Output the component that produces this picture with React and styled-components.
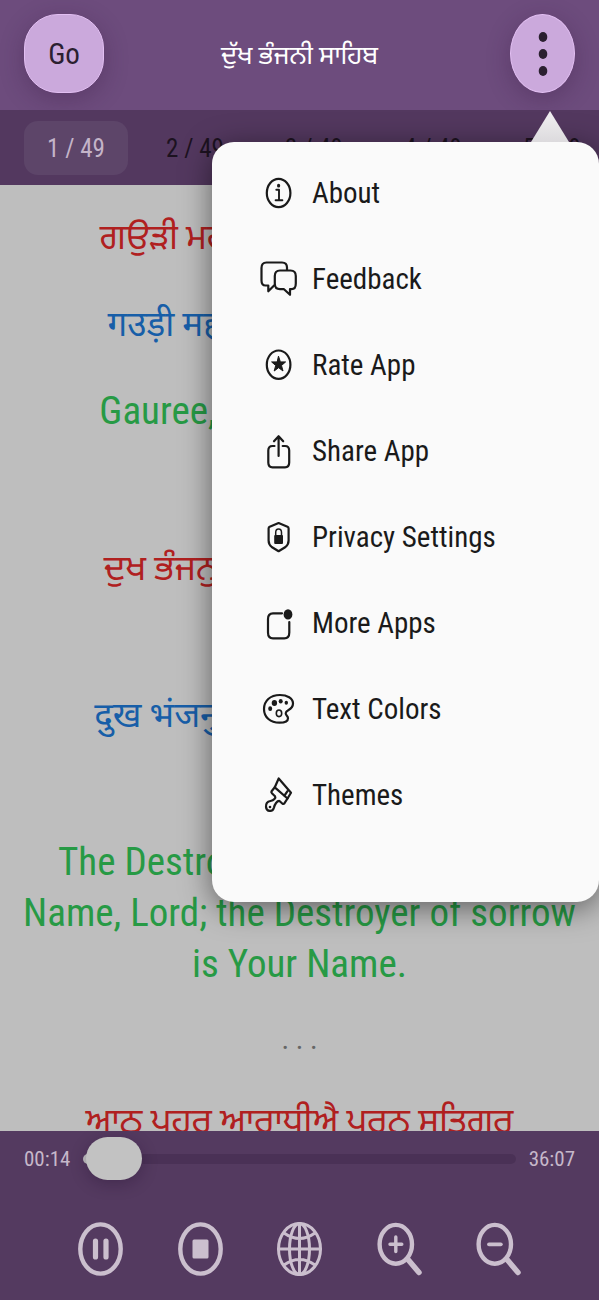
import React, { useState } from "react";
import styled, { createGlobalStyle } from "styled-components";

const GlobalStyle = createGlobalStyle`
    * {
        box-sizing: border-box;
    }
    body {
        margin: 0;
        font-family: "Roboto Condensed", "Liberation Sans Narrow", Roboto, "Noto Sans", "Noto Sans Gurmukhi", "Noto Sans Devanagari", sans-serif;
    }
    button {
        padding: 0;
        border: 0;
        background: none;
        color: inherit;
        font: inherit;
        cursor: pointer;
    }
    svg {
        display: block;
    }
`;

const Screen = styled.div`
    position: relative;
    display: flex;
    flex-direction: column;
    height: 100vh;
    overflow: hidden;
    background: #bebebe;
`;

const Header = styled.header`
    display: grid;
    grid-template-columns: 1fr auto 1fr;
    align-items: center;
    height: 110px;
    padding: 0 24px 4px;
    flex-shrink: 0;
    background: #6d4c7d;
`;

const Title = styled.h1`
    margin: 0;
    padding-top: 8px;
    color: #fff;
    font-size: 26px;
    font-weight: 400;
`;

const RoundButton = styled.button`
    display: flex;
    align-items: center;
    justify-content: center;
    justify-self: ${props => props.side};
    width: ${props => props.width}px;
    height: 79px;
    border: 1px solid #e2bff2;
    border-radius: ${props => props.radius};
    padding-top: 2px;
    background: #cba9dc;
    color: #2b2030;
    font-size: 29px;
    box-shadow: 0 6px 24px rgba(50, 20, 60, 0.3);
`;

const Tabs = styled.nav`
    display: flex;
    gap: 15px;
    padding: 11px 24px 10px;
    flex-shrink: 0;
    overflow: hidden;
    background: #53385f;
`;

const Tab = styled.button`
    flex: 0 0 104px;
    height: 54px;
    border-radius: 14px;
    background: ${props => (props.active ? "#5d4569" : "none")};
    color: ${props => (props.active ? "#c4b4c8" : "#1c1220")};
    font-size: 25px;
`;

const Reader = styled.main`
    flex: 1 1 0;
    min-height: 0;
    padding: 23px 16px 0;
    overflow: hidden;
    text-align: center;
`;

const Verse = styled.p`
    margin: 0 0 27px;
    color: ${props => props.color};
    font-size: 35px;
    line-height: 60px;
`;

const English = styled(Verse)`
    margin: 0;
    padding-top: 4px;
    font-size: 39px;
    line-height: 51px;
`;

const Divider = styled.div`
    padding: 24px 0 27px;
    color: #666;
    font-size: 29px;
    line-height: 51px;
`;

const Menu = styled.div`
    position: absolute;
    top: 142px;
    right: 0;
    width: 387px;
    padding: 8px 0 64px;
    border-radius: 22px;
    background: #fafafa;
    box-shadow: 0 6px 30px rgba(0, 0, 0, 0.5);
`;

const MenuArrow = styled.svg`
    position: absolute;
    top: -32px;
    right: 29px;
`;

const MenuItem = styled.button`
    display: flex;
    align-items: center;
    gap: 12px;
    width: 100%;
    height: 86px;
    padding-left: 44px;
    color: #1a1a1a;
    font-size: 29px;
    text-align: left;
`;

const Player = styled.footer`
    flex-shrink: 0;
    padding: 6px 24px 23px;
    background: #543a60;
`;

const Progress = styled.div`
    display: flex;
    align-items: center;
    gap: 13px;
    height: 44px;
    color: #c6b8ca;
    font-size: 21px;
`;

const Slider = styled.input`
    flex: 1;
    min-width: 0;
    height: 44px;
    margin: 0;
    appearance: none;
    background: none;
    &::-webkit-slider-runnable-track {
        height: 10px;
        border-radius: 5px;
        background: linear-gradient(to right, #c2c2c2 20px, #4a3156 20px);
    }
    &::-webkit-slider-thumb {
        appearance: none;
        width: 56px;
        height: 43px;
        margin-top: -17px;
        border-radius: 22px;
        background: #c2c2c2;
        box-shadow: 0 4px 16px rgba(30, 10, 40, 0.3);
    }
`;

const Controls = styled.div`
    display: flex;
    justify-content: space-between;
    padding: 40px 54px 0;
    color: #cbbfce;
`;

const Icon = ({ children }) => (
    <svg width="44" height="44" viewBox="0 0 44 44" fill="none" stroke="currentColor" strokeWidth="2.2" strokeLinecap="round" strokeLinejoin="round" aria-hidden="true">
        {children}
    </svg>
);

const ControlIcon = ({ children }) => (
    <svg width="45" height="56" viewBox="0 0 45 56" fill="none" stroke="currentColor" strokeWidth="4.4" strokeLinecap="round" aria-hidden="true">
        {children}
    </svg>
);

const menuItems = [
    {
        label: "About",
        icon: (
            <Icon>
                <ellipse cx="22.6" cy="22" rx="11.8" ry="14.2" />
                <path d="M20.3 18.8H23V29M19.6 29.3H26.4" strokeWidth="1.9" />
                <ellipse cx="22.6" cy="14.7" rx="1.6" ry="1.9" fill="currentColor" stroke="none" />
            </Icon>
        )
    },
    {
        label: "Feedback",
        icon: (
            <Icon>
                <path d="M31 13V10.5Q31 5.5 26 5.5H10.5Q5.5 5.5 5.5 11V23.5Q5.5 28.5 9.5 28.5H12.3V34.3L18.3 28.3" />
                <path d="M24 13.5H34.5Q39.8 13.5 39.8 19V26.5Q39.8 32.2 35.5 32.2H34V37.8L28 32.2H24Q18.8 32.2 18.8 26.5V19Q18.8 13.5 24 13.5Z" />
            </Icon>
        )
    },
    {
        label: "Rate App",
        icon: (
            <Icon>
                <ellipse cx="22.6" cy="21.7" rx="11.8" ry="14.2" />
                <path d="M22.6 13.5L24.4 18.9H29.6L25.5 22.5L27 28L22.6 24.7L18.2 28L19.7 22.5L15.6 18.9H20.8Z" fill="currentColor" strokeWidth="1" />
            </Icon>
        )
    },
    {
        label: "Share App",
        icon: (
            <Icon>
                <path d="M22.6 27V7.5M18 12.3L22.6 7.2L27.2 12.3" />
                <path d="M18.5 17H16.5Q12.3 17 12.3 21.5V33.5Q12.3 38.3 16.5 38.3H29Q33.2 38.3 33.2 33.5V21.5Q33.2 17 29 17H26.7" />
            </Icon>
        )
    },
    {
        label: "Privacy Settings",
        icon: (
            <Icon>
                <path d="M22.6 8L31.5 11.8Q32.6 12.3 32.6 13.5V25.5Q32.6 29.5 29.5 32L22.6 36.2L15.7 32Q12.6 29.5 12.6 25.5V13.5Q12.6 12.3 13.7 11.8Z" />
                <path d="M19.7 21V17.5C19.7 12.8 25.5 12.8 25.5 17.5V21" strokeWidth="1.5" />
                <rect x="18.2" y="20" width="8.8" height="9" rx="1" fill="currentColor" stroke="none" />
            </Icon>
        )
    },
    {
        label: "More Apps",
        icon: (
            <Icon>
                <path d="M26 12.3H17Q12 12.3 12 18V31.5Q12 37.3 17 37.3H28.3Q33.3 37.3 33.3 31.5V21" />
                <ellipse cx="32" cy="13.4" rx="4.4" ry="5.2" fill="currentColor" stroke="none" />
            </Icon>
        )
    },
    {
        label: "Text Colors",
        icon: (
            <Icon>
                <path d="M37 16.5C37 11 31 8 24 8C14 8 8 14 8 22C8 30.5 14.5 35.7 23.5 35.7C28.5 35.7 32 34.2 32 31.2C32 28.8 29.7 28.6 29.7 26.2C29.7 22.3 37 23.5 37 16.5Z" />
                <ellipse cx="23" cy="26.3" rx="2.7" ry="3.3" strokeWidth="1.6" />
                <g fill="currentColor" stroke="none">
                    <ellipse cx="14.2" cy="21.7" rx="2" ry="2.4" />
                    <ellipse cx="18.4" cy="16" rx="2.7" ry="3" />
                    <ellipse cx="24.7" cy="14.2" rx="2" ry="2.3" />
                    <ellipse cx="30.3" cy="15.7" rx="1.7" ry="2" />
                </g>
            </Icon>
        )
    },
    {
        label: "Themes",
        icon: (
            <Icon>
                <path d="M22.7 5.5L35 19.7L31.5 25.5L18.8 14.3Z" />
                <path d="M18.8 14.3L15.6 18.2Q14.9 19.3 15.9 20.2L19 23.2C20 24.8 18 27.5 14.5 28C11 28.7 9.8 31.2 10 33.8C10.4 38.8 16.8 39.5 18 34.5C18.6 31.5 21 27.6 23.5 28L26.5 30.7Q27.7 31.2 28.5 30.2L31.5 25.5M31.5 18.2L28.5 22.5" />
                <circle cx="14" cy="34" r="1.3" fill="currentColor" stroke="none" />
            </Icon>
        )
    }
];

const controls = [
    {
        label: "Pause",
        icon: (
            <ControlIcon>
                <ellipse cx="22.5" cy="28" rx="20.2" ry="24.6" />
                <path d="M17.5 20V36M28 20V36" strokeWidth="5.2" />
            </ControlIcon>
        )
    },
    {
        label: "Stop",
        icon: (
            <ControlIcon>
                <ellipse cx="22.5" cy="28" rx="20.2" ry="24.6" />
                <rect x="14.5" y="18.5" width="16" height="19" rx="1.5" fill="currentColor" stroke="none" />
            </ControlIcon>
        )
    },
    {
        label: "Language",
        icon: (
            <ControlIcon>
                <g strokeWidth="3">
                    <ellipse cx="22.5" cy="28" rx="21" ry="25.5" />
                    <ellipse cx="22.5" cy="28" rx="10" ry="25.5" />
                    <path d="M22.5 2.5V53.5M1.5 28H43.5M7 12Q22.5 23 38 12M7 44Q22.5 33 38 44" />
                </g>
            </ControlIcon>
        )
    },
    {
        label: "Zoom in",
        icon: (
            <ControlIcon>
                <ellipse cx="18.8" cy="23.3" rx="16.2" ry="19.4" />
                <path d="M31 38.5L42 51.5" strokeWidth="5.5" />
                <path d="M18.8 16V30.5M13 23.3H24.8" strokeWidth="3.4" />
            </ControlIcon>
        )
    },
    {
        label: "Zoom out",
        icon: (
            <ControlIcon>
                <ellipse cx="18.8" cy="23.3" rx="16.2" ry="19.4" />
                <path d="M31 38.5L42 51.5" strokeWidth="5.5" />
                <path d="M13 23.3H24.8" strokeWidth="3.8" />
            </ControlIcon>
        )
    }
];

const pages = [1, 2, 3, 4, 5];

const red = "#b0201f";
const blue = "#175ea8";
const green = "#279a45";

export default () => {
    const [page, setPage] = useState(1);
    const [seconds, setSeconds] = useState(14);

    return (
        <Screen>
            <GlobalStyle />
            <Header>
                <RoundButton side="start" width={80} radius="34px">Go</RoundButton>
                <Title lang="pa">ਦੁੱਖ ਭੰਜਨੀ ਸਾਹਿਬ</Title>
                <RoundButton side="end" width={65} radius="50%" aria-label="Menu">
                    <svg width="10" height="46" viewBox="0 0 10 46" fill="currentColor">
                        <ellipse cx="5" cy="6" rx="4.3" ry="5" />
                        <ellipse cx="5" cy="23" rx="4.3" ry="5" />
                        <ellipse cx="5" cy="40" rx="4.3" ry="5" />
                    </svg>
                </RoundButton>
            </Header>
            <Tabs>
                {pages.map(number => (
                    <Tab key={number} active={number === page} onClick={() => setPage(number)}>
                        {number} / 49
                    </Tab>
                ))}
            </Tabs>
            <Reader>
                <Verse lang="pa" color={red}>ਗਉੜੀ ਮਹਲਾ ੫ ਮਾਂਝ ॥ ਅੰਗ ੨੧੮</Verse>
                <Verse lang="hi" color={blue}>गउड़ी महला ५ मांझ ॥ अंग २१८</Verse>
                <English color={green}>Gauree, Fifth Mehl, Maajh:</English>
                <Divider>. . .</Divider>
                <Verse lang="pa" color={red}>
                    ਦੁਖ ਭੰਜਨੁ ਤੇਰਾ ਨਾਮੁ ਜੀ ਦੁਖ ਭੰਜਨੁ
                    <br />
                    ਤੇਰਾ ਨਾਮੁ ॥
                </Verse>
                <Verse lang="hi" color={blue}>
                    दुख भंजनु तेरा नामु जी दुख भंजनु
                    <br />
                    तेरा नामु ॥
                </Verse>
                <English color={green}>
                    The Destroyer of sorrow is Your Name, Lord; the Destroyer of sorrow is Your Name.
                </English>
                <Divider>. . .</Divider>
                <Verse lang="pa" color={red}>ਆਠ ਪਹਰ ਆਰਾਧੀਐ ਪੂਰਨ ਸਤਿਗੁਰ</Verse>
            </Reader>
            <Player>
                <Progress>
                    <span>00:14</span>
                    <Slider
                        type="range"
                        aria-label="Position"
                        min="0"
                        max="2167"
                        value={seconds}
                        onChange={event => setSeconds(Number(event.target.value))}
                    />
                    <span>36:07</span>
                </Progress>
                <Controls>
                    {controls.map(control => (
                        <button key={control.label} aria-label={control.label}>{control.icon}</button>
                    ))}
                </Controls>
            </Player>
            <Menu>
                <MenuArrow width="40" height="32" viewBox="0 0 40 32" aria-hidden="true">
                    <defs>
                        <linearGradient id="arrow" x1="0" y1="0" x2="0" y2="1">
                            <stop offset="0" stopColor="#f2f1f2" />
                            <stop offset="1" stopColor="#dcdadd" />
                        </linearGradient>
                    </defs>
                    <path d="M20 1L39 32H1Z" fill="url(#arrow)" />
                </MenuArrow>
                {menuItems.map(item => (
                    <MenuItem key={item.label}>
                        {item.icon}
                        {item.label}
                    </MenuItem>
                ))}
            </Menu>
        </Screen>
    );
};
